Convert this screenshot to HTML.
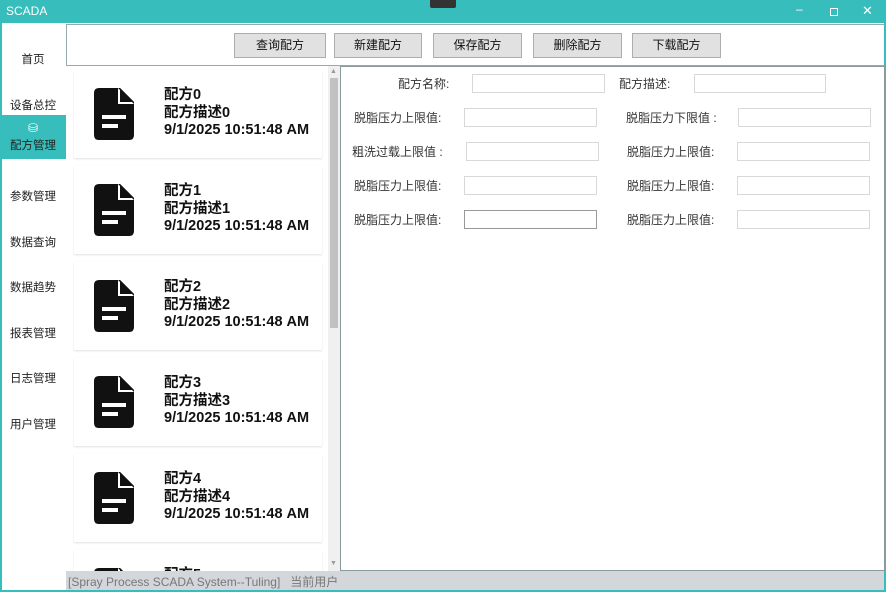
<!DOCTYPE html><html><head><meta charset="utf-8"><style>
*{box-sizing:border-box;margin:0;padding:0}
html,body{width:886px;height:592px;overflow:hidden}
body{background:#fff;font-family:"Liberation Sans","Noto Sans CJK SC",sans-serif;position:relative}
.a{position:absolute}
.tb{left:0;top:0;width:886px;height:23px;background:#37bdbb;color:#fff;font-size:12px}
.nav{left:0;width:66px;text-align:center;font-size:11.5px;color:#222}
.btn{top:33px;height:25px;background:#e1e1e1;border:1px solid #adadad;font-size:12px;text-align:center;line-height:23px;color:#111}
.card{left:74px;width:248px;height:88px;background:#fff;box-shadow:0 1px 2px rgba(0,0,0,.12)}
.txt{left:90px;top:17px;font-size:14.5px;font-weight:bold;line-height:17.5px;color:#111;white-space:nowrap}
.lbl{font-size:12px;color:#333;white-space:nowrap}
.in{height:19px;border:1px solid #d8d8d8;background:#fff}
</style></head><body>
<div class="a tb"><span class="a" style="left:6px;top:4px">SCADA</span>
<div class="a" style="left:430px;top:0;width:26px;height:8px;background:#333;border-radius:0 0 2px 2px"></div>
<span class="a" style="left:796px;top:2px">–</span>
<div class="a" style="left:830px;top:8px;width:8px;height:8px;border:1px solid #fff"></div>
<span class="a" style="left:862px;top:3px;font-size:13px">✕</span></div>
<div class="a" style="left:0;top:23px;width:2px;height:569px;background:#37bdbb"></div>
<div class="a" style="left:884px;top:23px;width:2px;height:569px;background:#37bdbb"></div>
<div class="a" style="left:0;top:590px;width:886px;height:2px;background:#37bdbb"></div>
<div class="a nav" style="top:51px">首页</div>
<div class="a nav" style="top:97px">设备总控</div>
<div class="a nav" style="top:115px;height:44px;background:#37bdbb;color:#222"><div style="color:#fff;font-size:12px;margin-top:6px">⛁</div><div style="margin-top:2px">配方管理</div></div>
<div class="a nav" style="top:188px">参数管理</div>
<div class="a nav" style="top:234px">数据查询</div>
<div class="a nav" style="top:279px">数据趋势</div>
<div class="a nav" style="top:325px">报表管理</div>
<div class="a nav" style="top:370px">日志管理</div>
<div class="a nav" style="top:416px">用户管理</div>
<div class="a" style="left:66px;top:24px;width:818px;height:42px;border:1px solid #9aa;border-right:none"></div>
<div class="a btn" style="left:234px;width:92px">查询配方</div>
<div class="a btn" style="left:334px;width:88px">新建配方</div>
<div class="a btn" style="left:433px;width:89px">保存配方</div>
<div class="a btn" style="left:533px;width:89px">删除配方</div>
<div class="a btn" style="left:632px;width:89px">下载配方</div>
<div class="a" style="left:66px;top:66px;width:274px;height:505px;overflow:hidden">
<div id="list"></div>
<div class="a" style="left:262px;top:0;width:12px;height:505px;background:#f0f0f0"></div>
<div class="a" style="left:264px;top:12px;width:8px;height:250px;background:#c2c2c2"></div>
<div class="a" style="left:264px;top:2px;font-size:7px;color:#999">▲</div>
<div class="a" style="left:264px;top:494px;font-size:7px;color:#999">▼</div>
</div>
<div class="a" style="left:340px;top:66px;width:545px;height:505px;border:1px solid #8a9a9a"></div>
<div class="a lbl" style="left:398px;top:75px">配方名称:</div><div class="a in" style="left:472px;top:74px;width:133px"></div>
<div class="a lbl" style="left:619px;top:75px">配方描述:</div><div class="a in" style="left:694px;top:74px;width:132px"></div>
<div class="a lbl" style="left:354px;top:109px">脱脂压力上限值:</div><div class="a in" style="left:464px;top:108px;width:133px"></div>
<div class="a lbl" style="left:626px;top:109px">脱脂压力下限值 :</div><div class="a in" style="left:738px;top:108px;width:133px"></div>
<div class="a lbl" style="left:352px;top:143px">粗洗过载上限值 :</div><div class="a in" style="left:466px;top:142px;width:133px"></div>
<div class="a lbl" style="left:627px;top:143px">脱脂压力上限值:</div><div class="a in" style="left:737px;top:142px;width:133px"></div>
<div class="a lbl" style="left:354px;top:177px">脱脂压力上限值:</div><div class="a in" style="left:464px;top:176px;width:133px"></div>
<div class="a lbl" style="left:627px;top:177px">脱脂压力上限值:</div><div class="a in" style="left:737px;top:176px;width:133px"></div>
<div class="a lbl" style="left:354px;top:211px">脱脂压力上限值:</div><div class="a in" style="left:464px;top:210px;width:133px;border-color:#999"></div>
<div class="a lbl" style="left:627px;top:211px">脱脂压力上限值:</div><div class="a in" style="left:737px;top:210px;width:133px"></div>
<div class="a" style="left:66px;top:571px;width:818px;height:19px;background:#d3d7db;font-size:12px;color:#777;padding:2px 0 0 2px;white-space:nowrap;overflow:hidden">[Spray Process SCADA System--Tuling]&nbsp;&nbsp; 当前用户</div>
<script>
var h='';for(var i=0;i<6;i++){var t=4+i*96;h+='<div class="a card" style="left:8px;top:'+t+'px"><svg class="a" style="left:20px;top:18px" width="40" height="52" viewBox="0 0 40 52"><path d="M5 0H26L40 14V47Q40 52 35 52H5Q0 52 0 47V5Q0 0 5 0Z" fill="#111"/><path d="M24 0V16H40" fill="#fff"/><path d="M26 0L40 14H26Z" fill="#111"/><rect x="8" y="27" width="24" height="4" fill="#fff"/><rect x="8" y="36" width="16" height="4" fill="#fff"/></svg><div class="a txt">配方'+i+'<br>配方描述'+i+'<br>9/1/2025 10:51:48 AM</div></div>';}
document.getElementById('list').innerHTML=h;
</script>
</body></html>
